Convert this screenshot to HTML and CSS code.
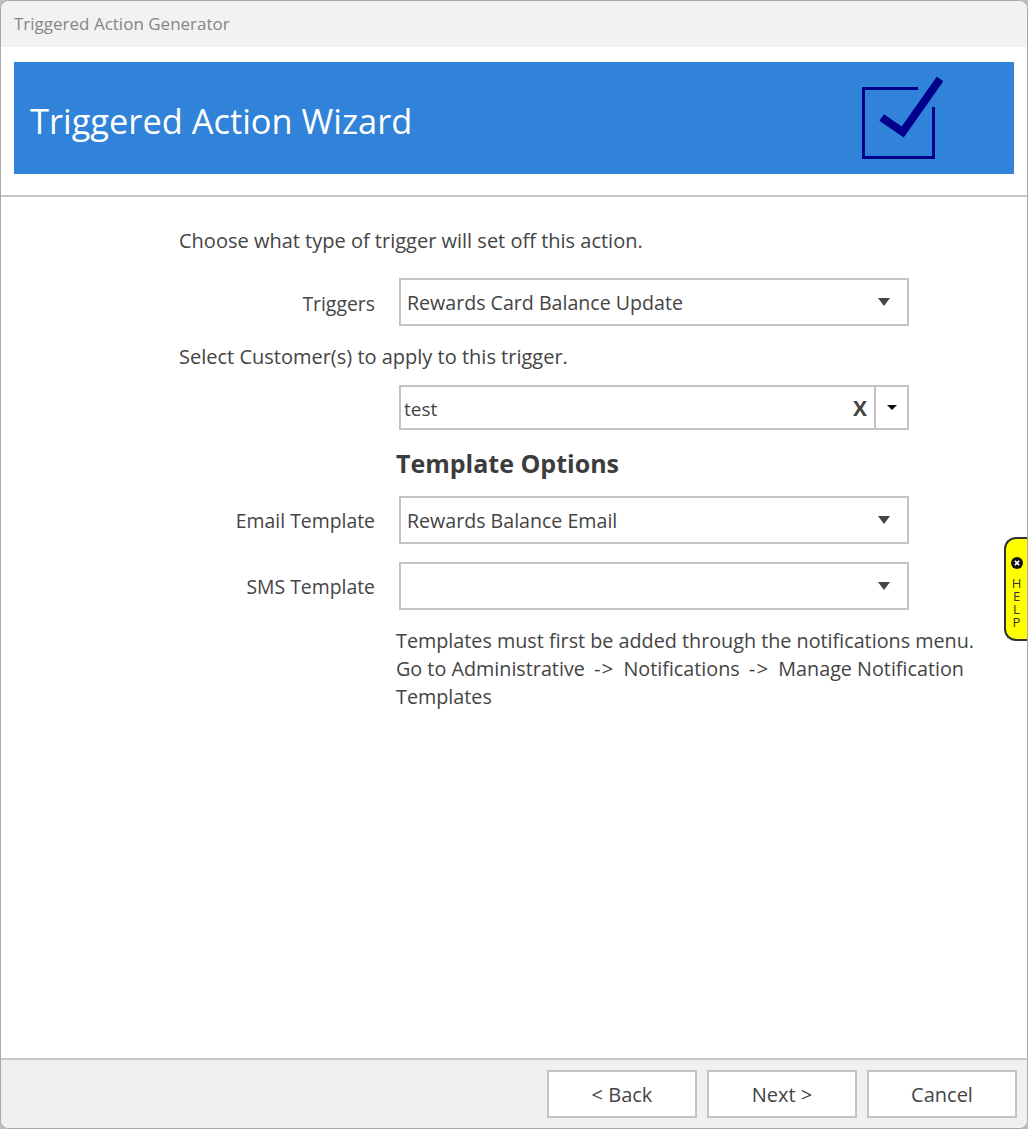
FILE: index.html
```html
<!DOCTYPE html>
<html lang="en">
<head>
  <meta charset="UTF-8" />
  <title>Triggered Action Generator</title>
  <link rel="stylesheet" href="styles.css">
</head>
<body>
  <div class="window">
    <div class="title-bar">Triggered Action Generator</div>

    <div class="banner-wrap">
      <div class="banner">
        <h1>Triggered Action Wizard</h1>
        <svg class="banner-icon" width="82" height="84" viewBox="0 0 82 84">
          <path d="M57 11.5H2.5V80.5H72.5V30" fill="none" stroke="#00008b" stroke-width="3"/>
          <path d="M20.7 40.5L41.7 55L79 2" fill="none" stroke="#00008b" stroke-width="8"/>
        </svg>
      </div>
    </div>

    <div class="content">
      <p class="intro">Choose what type of trigger will set off this action.</p>

      <div class="field field-triggers">
        <label>Triggers</label>
        <div class="select">
          <span>Rewards Card Balance Update</span>
          <i class="arrow"></i>
        </div>
      </div>

      <p class="intro intro-customer">Select Customer(s) to apply to this trigger.</p>

      <div class="field field-customer">
        <label></label>
        <div class="combo">
          <span class="combo-value">test</span>
          <span class="combo-clear">X</span>
          <span class="combo-drop"><i class="arrow arrow-small"></i></span>
        </div>
      </div>

      <h2>Template Options</h2>

      <div class="field field-email">
        <label>Email Template</label>
        <div class="select">
          <span>Rewards Balance Email</span>
          <i class="arrow"></i>
        </div>
      </div>

      <div class="field">
        <label>SMS Template</label>
        <div class="select">
          <span></span>
          <i class="arrow"></i>
        </div>
      </div>

      <p class="note">Templates must first be added through the notifications menu.<br>Go to Administrative <span class="sep">-&gt;</span> Notifications <span class="sep">-&gt;</span> Manage Notification<br>Templates</p>
    </div>

    <div class="footer">
      <button>&lt; Back</button>
      <button>Next &gt;</button>
      <button>Cancel</button>
    </div>

    <div class="help-tab">
      <svg width="12" height="12" viewBox="0 0 12 12">
        <circle cx="6" cy="6" r="6" fill="#111"/>
        <path d="M3.8 3.8L8.2 8.2M8.2 3.8L3.8 8.2" stroke="#fff" stroke-width="1.6"/>
      </svg>
      <span class="help-text">HELP</span>
    </div>
  </div>
</body>
</html>
```

FILE: styles.css
```css
* {
  margin: 0;
  padding: 0;
  box-sizing: border-box;
}

html, body {
  height: 100%;
  background: #bdbdbd;
}

body {
  font-family: "Open Sans", "Noto Sans", sans-serif;
  color: #444;
  font-size: 19.6px;
}

.window {
  position: relative;
  height: 1129px;
  display: flex;
  flex-direction: column;
  background: #fff;
  border: 1px solid #a8a8a8;
  border-radius: 9px;
  overflow: hidden;
}

.title-bar {
  height: 46px;
  padding-left: 13px;
  background: #f2f2f2;
  color: #858585;
  font-size: 17px;
  line-height: 45px;
}

.banner-wrap {
  padding: 15px 13px 21px;
  border-bottom: 2px solid #c6c6c6;
}

.banner {
  height: 112px;
  display: flex;
  justify-content: space-between;
  align-items: center;
  padding: 0 71px 0 16px;
  background: #3083d9;
}

.banner h1 {
  margin-top: 4px;
  color: #fff;
  font-size: 34.4px;
  font-weight: 400;
}

.banner-icon {
  margin-top: 1px;
}

.content {
  flex: 1;
  padding: 30px 0 0 178px;
}

.intro {
  font-size: 20px;
  line-height: 28px;
}

.intro-customer {
  margin-top: 17px;
}

.field {
  display: flex;
  align-items: center;
  gap: 24px;
  margin-top: 18px;
}

.field-triggers {
  margin-top: 23px;
}

.field-customer {
  margin-top: 14px;
}

.field-email {
  margin-top: 16px;
}

.field label {
  width: 196px;
  font-size: 19.4px;
  text-align: right;
}

.field-triggers label {
  padding-top: 3px;
}

.select {
  width: 510px;
  height: 48px;
  display: flex;
  justify-content: space-between;
  align-items: center;
  padding: 0 17px 0 6px;
  border: 2px solid #c4c4c4;
  background: #fff;
}

.arrow {
  display: block;
  width: 0;
  height: 0;
  border-left: 6px solid transparent;
  border-right: 6px solid transparent;
  border-top: 8px solid #444;
}

.arrow-small {
  border-left-width: 5px;
  border-right-width: 5px;
  border-top: 5px solid #111;
}

.combo {
  width: 510px;
  height: 45px;
  display: flex;
  align-items: center;
  border: 2px solid #c4c4c4;
}

.combo-value {
  flex: 1;
  padding: 2px 0 0 3px;
  font-size: 19px;
}

.combo-clear {
  width: 21px;
  font-weight: 700;
  font-size: 21px;
  color: #444;
}

.combo-drop {
  width: 33px;
  height: 100%;
  display: flex;
  justify-content: center;
  align-items: center;
  border-left: 2px solid #c4c4c4;
}

h2 {
  margin: 16px 0 0 217px;
  font-size: 25px;
  line-height: 34px;
  font-weight: 700;
  color: #3c3c3c;
}

.note {
  margin: 17px 0 0 217px;
  font-size: 19.75px;
  line-height: 28px;
  white-space: nowrap;
}

.sep {
  margin: 0 4px;
  font-size: 20.5px;
  letter-spacing: 1px;
  line-height: 1;
}

.footer {
  height: 70px;
  display: flex;
  justify-content: flex-end;
  gap: 10px;
  padding: 10px 10px 0 0;
  background: #f0f0f0;
  border-top: 2px solid #c6c6c6;
}

.footer button {
  width: 150px;
  height: 48px;
  font-family: inherit;
  font-size: 20px;
  color: #444;
  background: #fff;
  border: 2px solid #c4c4c4;
}

.help-tab {
  position: absolute;
  top: 536px;
  right: 0;
  width: 23px;
  height: 104px;
  display: flex;
  flex-direction: column;
  align-items: center;
  padding-top: 18px;
  background: #ffff00;
  border: 2px solid #333;
  border-right: none;
  border-radius: 12px 0 0 12px;
  color: #333;
}

.help-tab svg {
  margin-bottom: 5px;
}

.help-text {
  writing-mode: vertical-rl;
  text-orientation: upright;
  font-size: 13px;
  line-height: 16px;
  letter-spacing: -5px;
}
```
